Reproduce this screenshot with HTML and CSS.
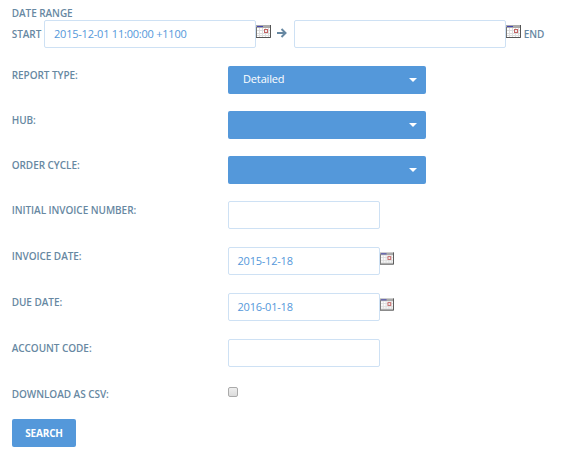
FILE: index.html
```html
<!DOCTYPE html>
<html lang="en">
<head>
<meta charset="utf-8">
<title>Report</title>
<link rel="stylesheet" href="styles.css">
</head>
<body>
<svg width="0" height="0" class="defs">
  <symbol id="calendar" viewBox="0 0 15 13">
    <rect width="15" height="13" fill="#aaa"/>
    <rect x="1" y="3" width="13" height="9" fill="#fff"/>
    <path d="M3.500 3v9M6.500 3v9M9.500 3v9M12.500 3v9M1 5.500h13M1 8.500h13M1 10.500h13" stroke="#dedede"/>
    <rect x="1" y="1" width="6" height="1" fill="#4444b0"/>
    <rect x="8.500" y="4.500" width="3" height="3" fill="#eee" stroke="#c46464"/>
    <path d="M14.500 0v12.500H0" fill="none" stroke="#555"/>
    <path d="M.5 2v10" stroke="#777"/>
  </symbol>
</svg>
<form class="report">
  <div class="label heading">DATE RANGE</div>
  <div class="range">
    <label class="label start">START</label>
    <div class="field wide">2015-12-01 11:00:00 +1100</div>
    <svg class="cal"><use href="#calendar"/></svg>
    <svg class="arrow" viewBox="0 0 10 10"><path d="M0 5h8M4.500 1l4 4-4 4" fill="none" stroke="#6788a2" stroke-width="2"/></svg>
    <div class="field wide"></div>
    <svg class="cal"><use href="#calendar"/></svg>
    <label class="label end">END</label>
  </div>
  <div class="rows">
    <label class="label">REPORT TYPE:</label>
    <div class="select">Detailed<span class="caret"></span></div>
    <label class="label">HUB:</label>
    <div class="select"><span class="caret"></span></div>
    <label class="label">ORDER CYCLE:</label>
    <div class="select"><span class="caret"></span></div>
    <label class="label">INITIAL INVOICE NUMBER:</label>
    <div class="field"></div>
    <label class="label">INVOICE DATE:</label>
    <div class="dated"><div class="field">2015-12-18</div><svg class="cal"><use href="#calendar"/></svg></div>
    <label class="label">DUE DATE:</label>
    <div class="dated"><div class="field">2016-01-18</div><svg class="cal"><use href="#calendar"/></svg></div>
    <label class="label">ACCOUNT CODE:</label>
    <div class="field"></div>
    <label class="label">DOWNLOAD AS CSV:</label>
    <span class="check"></span>
  </div>
  <button type="button" class="search">SEARCH</button>
</form>
</body>
</html>
```
FILE: styles.css
```css
* {
  box-sizing: border-box;
}

body {
  margin: 0;
  background: #fff;
  font-family: "Open Sans", sans-serif;
}

.defs {
  display: block;
}

.report {
  padding: 6px 0 0 12px;
}

.label {
  margin-left: -0.3px;
  font-size: 10px;
  font-weight: 600;
  letter-spacing: -0.05px;
  line-height: 14px;
  color: #6788a2;
  white-space: nowrap;
}

.rows .label {
  padding-top: 2px;
}

.range {
  display: flex;
  align-items: flex-start;
  height: 46px;
}

.start {
  width: 32.3px;
  padding-top: 7px;
}

.end {
  padding: 7px 0 0 3px;
}

.field {
  flex: none;
  width: 152px;
  height: 28px;
  padding-left: 9px;
  border: 1px solid #cee1f4;
  border-radius: 2px;
  font-size: 11px;
  letter-spacing: -0.22px;
  line-height: 26px;
  color: #5498da;
}

.wide {
  width: 212px;
}

.cal {
  flex: none;
  width: 15px;
  height: 13px;
  margin-top: 5px;
}

.arrow {
  width: 10px;
  height: 10px;
  margin: 8px 7px 0 6px;
}

.rows {
  display: grid;
  grid-template-columns: 216px 198px;
  grid-template-rows: 45px 45px 45px 46px 46px 46px 46px 34px;
  align-items: start;
}

.select {
  display: flex;
  justify-content: space-between;
  height: 28px;
  padding: 0 9px 0 15px;
  border-radius: 2px;
  background: #5498da;
  color: #fff;
  font-size: 11px;
  letter-spacing: -0.15px;
  line-height: 26px;
}

.caret {
  margin: 12px 0 0 auto;
  border: 4px solid transparent;
  border-top-color: #fff;
  border-bottom: 0;
  height: 4px;
}

.dated {
  display: flex;
}

.dated .field {
  padding-left: 8.5px;
}

.dated .cal {
  width: 14px;
}

.check {
  width: 10px;
  height: 10px;
  margin-top: 2px;
  border: 1px solid #aaa;
  border-radius: 2px;
  background: linear-gradient(#eee, #dcdcdc);
}

.search {
  display: block;
  width: 64px;
  height: 28px;
  padding: 0;
  border: 0;
  border-radius: 2px;
  background: #5498da;
  color: #fff;
  font: 700 10px/28px "Open Sans", sans-serif;
  letter-spacing: -0.15px;
}
```
